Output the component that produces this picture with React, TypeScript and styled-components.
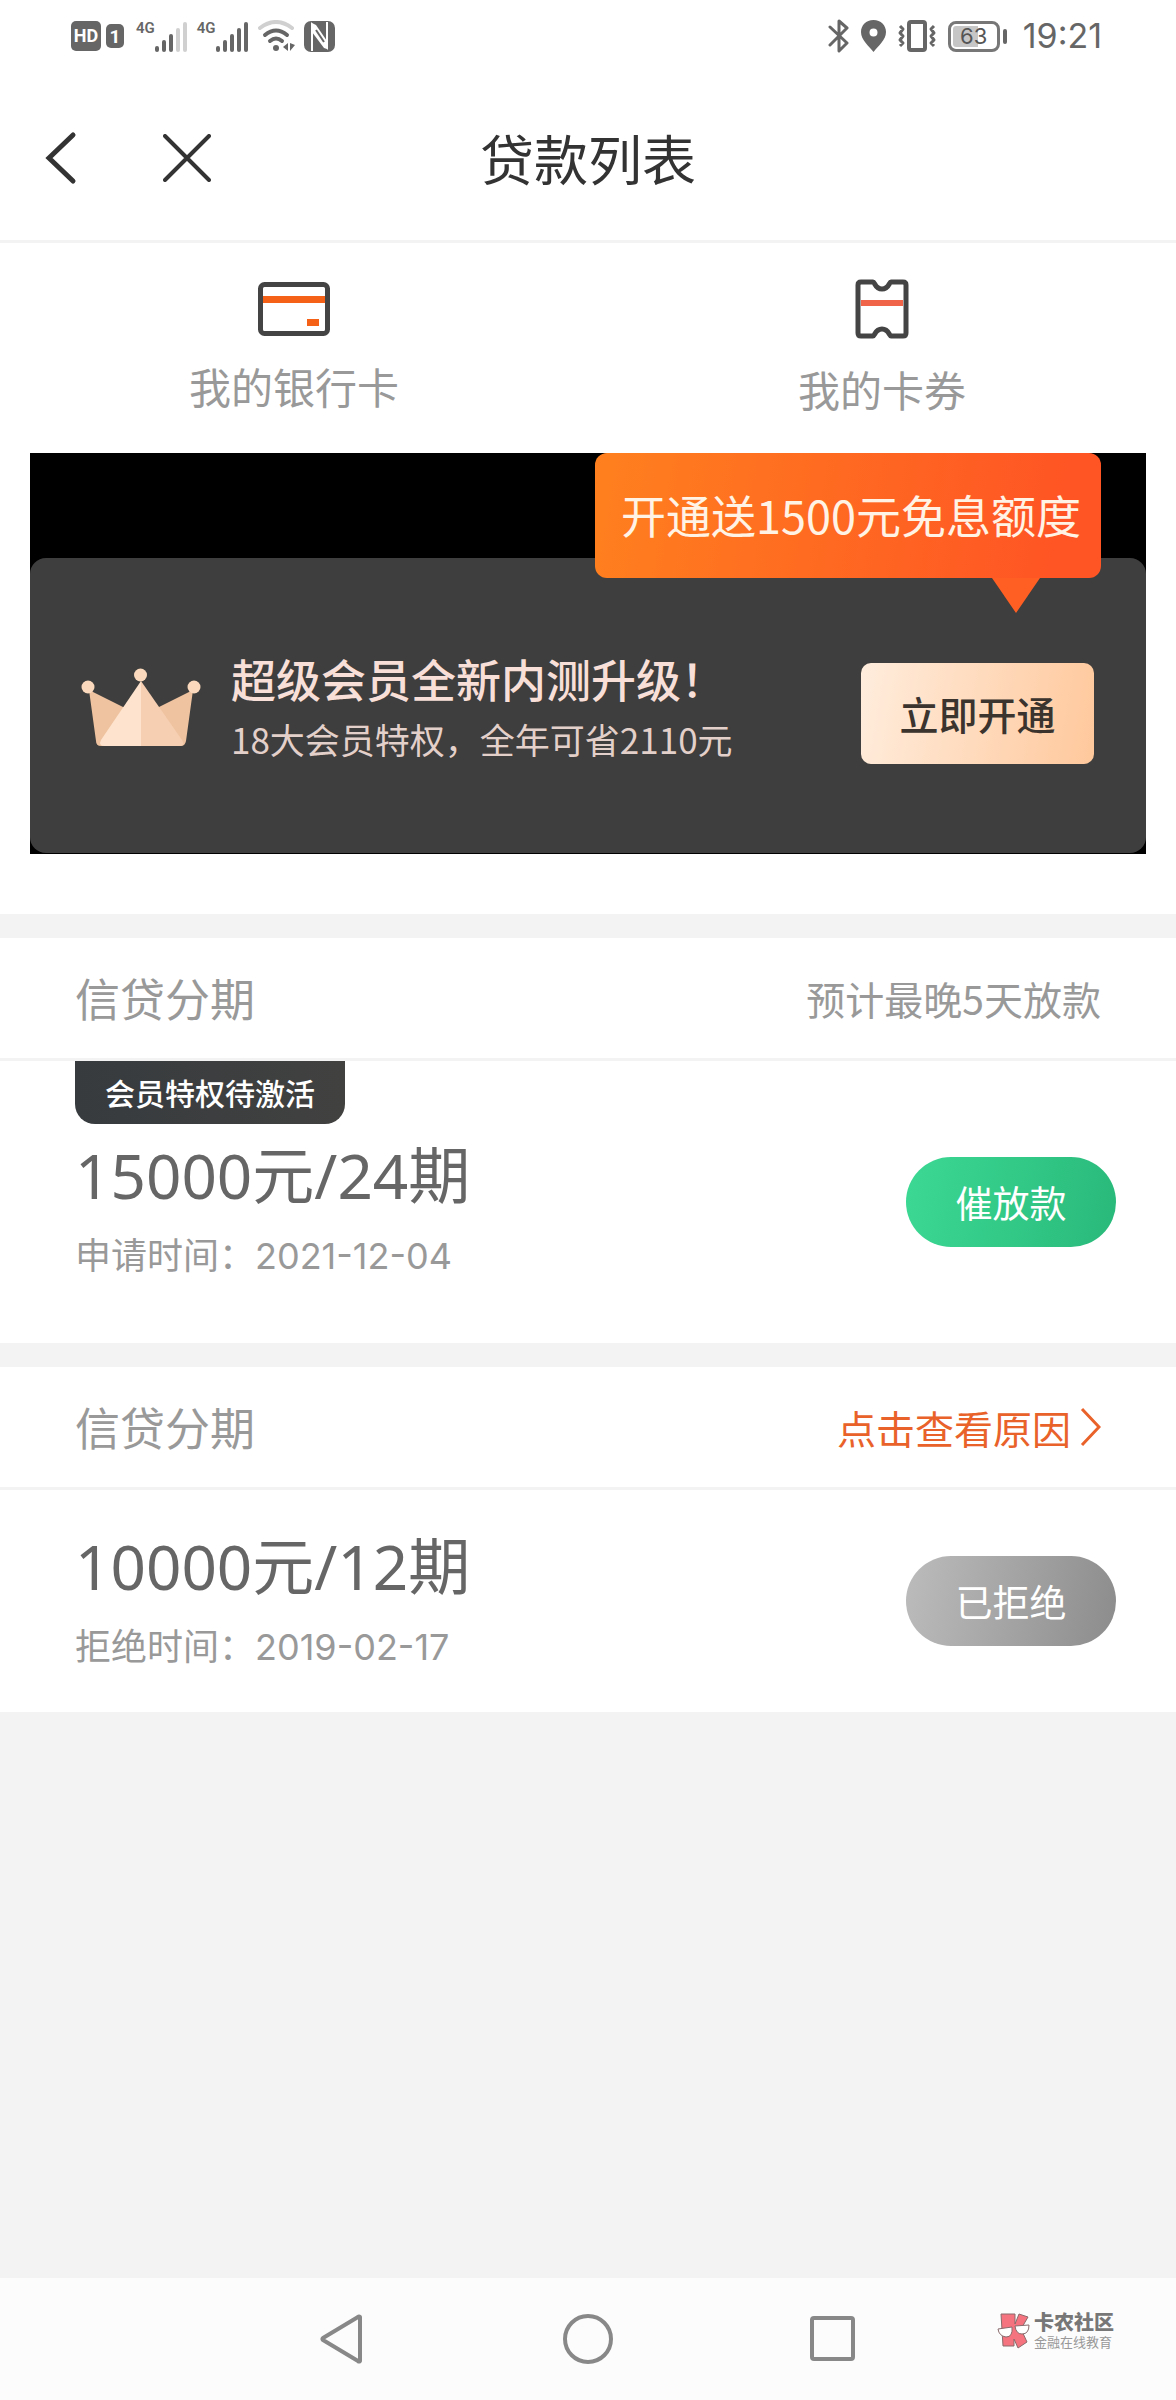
import React from 'react';
import styled, { createGlobalStyle } from 'styled-components';

const cjk = '"Noto Sans CJK SC", "Noto Sans", sans-serif';
const figures = 'Inter, "Noto Sans CJK SC", sans-serif';
const amountFigures = '"Noto Sans", "Noto Sans CJK SC", sans-serif';
const compact = '"Liberation Sans", "Noto Sans CJK SC", sans-serif';

const GlobalStyle = createGlobalStyle`
  * { box-sizing: border-box; }
  body { margin: 0; background: #f3f3f3; font-family: ${cjk}; }
  h1, h2, p { margin: 0; font-weight: 400; }
  button { border: 0; padding: 0; background: none; font-family: inherit; cursor: pointer; }
  svg { display: block; flex: none; }
`;

const Page = styled.div`
  display: flex;
  flex-direction: column;
  min-height: 100vh;
`;

/* ---------- status bar ---------- */

const StatusBar = styled.div`
  display: flex;
  justify-content: space-between;
  align-items: center;
  height: 78px;
  padding: 0 74px 6px 71px;
  background: #fff;
  color: #666;
`;

const StatusGroup = styled.div<{ $gap: number }>`
  display: flex;
  align-items: center;
  gap: ${(p) => p.$gap}px;
`;

const Chip = styled.span<{ $width: number; $height: number; $size: number }>`
  display: flex;
  align-items: center;
  justify-content: center;
  width: ${(p) => p.$width}px;
  height: ${(p) => p.$height}px;
  border-radius: 5px;
  background: #666;
  color: #fff;
  font: 700 ${(p) => p.$size}px/1 Roboto, sans-serif;
`;

const Signals = styled.div`
  display: flex;
  align-items: center;
  gap: 8px;
  padding-left: 7px;
`;

const Signal = styled.span`
  display: flex;
  align-items: flex-start;
  font: 600 15px/14px Roboto, sans-serif;
`;

const Battery = styled.span`
  display: flex;
  align-items: center;
  gap: 3px;
`;

const BatteryCase = styled.span`
  display: flex;
  align-items: center;
  justify-content: center;
  width: 52px;
  height: 31px;
  border: 3px solid #777;
  border-radius: 8px;
  padding: 2px;
  background: linear-gradient(to right, #c6c6c6 60%, #fff 60%) content-box;
  color: #555;
  font: 400 22px/24px ${figures};
`;

const BatteryTip = styled.span`
  width: 4px;
  height: 15px;
  border-radius: 2px;
  background: #666;
`;

const Clock = styled.time`
  margin-left: 4px;
  font: 400 34px/40px ${figures};
`;

/* ---------- title bar ---------- */

const TitleBar = styled.header`
  display: grid;
  grid-template-columns: 1fr auto 1fr;
  align-items: center;
  height: 165px;
  padding: 0 44px 3px;
  border-bottom: 3px solid #f3f3f3;
  background: #fff;
`;

const TitleActions = styled.div`
  display: flex;
  align-items: center;
  gap: 83px;
`;

const Title = styled.h1`
  color: #333;
  font-size: 54px;
  line-height: 72px;
`;

/* ---------- shortcuts ---------- */

const Shortcuts = styled.nav`
  display: grid;
  grid-template-columns: 1fr 1fr;
  align-items: center;
  padding: 36px 0 34px;
  background: #fff;
`;

const Shortcut = styled.a`
  display: flex;
  flex-direction: column;
  align-items: center;
  gap: 20px;
  color: #999;
  font-size: 42px;
  line-height: 60px;
  text-decoration: none;
`;

/* ---------- membership banner ---------- */

const BannerArea = styled.section`
  padding: 0 30px 60px;
  background: #fff;
`;

const Banner = styled.div`
  position: relative;
  padding: 105px 0 1px;
  background: #000;
`;

const BannerPanel = styled.div`
  display: flex;
  align-items: center;
  height: 295px;
  padding: 4px 52px 0 51px;
  border-radius: 16px;
  background: #3d3e3d;
`;

const Bubble = styled.p`
  position: absolute;
  top: 0;
  right: 45px;
  height: 125px;
  padding: 0 20px 0 26px;
  border-radius: 12px;
  background: linear-gradient(100deg, #ff801e, #ff5524 90%);
  color: #fff3e6;
  font-size: 45px;
  line-height: 124px;
  white-space: nowrap;

  &::after {
    content: '';
    position: absolute;
    top: 100%;
    right: 61px;
    border: solid transparent;
    border-width: 35px 24px 0;
    border-top-color: #ff5f23;
  }
`;

const BannerText = styled.div`
  flex: 1;
  padding: 3px 0 0 30px;
`;

const BannerTitle = styled.h2`
  color: #f8dfd7;
  font-size: 45px;
  font-weight: 500;
  line-height: 60px;
`;

const BannerNote = styled.p`
  color: #e4d0ca;
  font-size: 35px;
  line-height: 60px;
`;

const JoinButton = styled.button`
  width: 233px;
  height: 101px;
  margin-top: 11px;
  border-radius: 10px;
  background: linear-gradient(100deg, #ffeddd, #ffc89c);
  color: #3a332e;
  font-size: 39px;
  font-weight: 500;
`;

/* ---------- loan records ---------- */

const Loan = styled.section`
  border-top: 24px solid #f3f3f3;
  background: #fff;
`;

const LoanHead = styled.div`
  display: flex;
  align-items: center;
  justify-content: space-between;
  height: 123px;
  padding: 0 75px;
  border-bottom: 3px solid #f3f3f3;
  color: #999;
  font-size: 39px;
`;

const LoanKind = styled.h2`
  font-size: 45px;
  line-height: 60px;
`;

const ReasonLink = styled.a`
  display: flex;
  align-items: center;
  color: #e9622a;
  text-decoration: none;
`;

const LoanBody = styled.div`
  display: flex;
  align-items: center;
  justify-content: space-between;
  padding: 0 60px 0 75px;
`;

const LoanInfo = styled.div<{ $tagged: boolean }>`
  display: flex;
  flex-direction: column;
  align-items: flex-start;
  padding: ${(p) => (p.$tagged ? '0 0 60px' : '34px 0 38px')};
`;

const Tag = styled.span`
  margin-bottom: 9px;
  padding: 0 30px;
  border-radius: 0 0 20px 20px;
  background: linear-gradient(to right, #373b3e, #414140);
  color: #fff;
  font-size: 30px;
  font-weight: 500;
  line-height: 63px;
`;

const Amount = styled.p`
  color: #666;
  font: 400 62px/84px ${amountFigures};
`;

const DateLine = styled.p`
  padding-top: 12px;
  color: #999;
  font: 400 36px/54px ${figures};
`;

const Pill = styled.button<{ $from: string; $to: string }>`
  width: 210px;
  height: 90px;
  border-radius: 45px;
  background: linear-gradient(100deg, ${(p) => p.$from}, ${(p) => p.$to});
  color: #fff;
  font-size: 37px;
`;

/* ---------- system navigation ---------- */

const SystemNav = styled.footer`
  position: relative;
  display: flex;
  align-items: center;
  justify-content: center;
  gap: 195px;
  height: 122px;
  margin-top: auto;
  background: #fcfcfc;
`;

const Watermark = styled.div`
  position: absolute;
  top: 33px;
  right: 62px;
  display: flex;
  align-items: center;
  gap: 3px;
`;

const WatermarkName = styled.div`
  color: #777;
  font: 900 20px/24px ${compact};
`;

const WatermarkNote = styled.div`
  color: #999;
  font: 400 13px/16px ${compact};
`;

/* ---------- drawings ---------- */

const SignalBars = ({ level }: { level: number }) => (
  <svg width="34" height="31" viewBox="0 0 34 31">
    {[6, 12, 18, 24, 30].map((h, i) => (
      <rect key={h} x={i * 7} y={31 - h} width="4" height={h} rx="2" fill={i < level ? '#666' : '#d0d0d0'} />
    ))}
  </svg>
);

const WifiIcon = () => (
  <svg width="38" height="32" viewBox="0 0 38 32" fill="none" strokeWidth="4" strokeLinecap="round">
    <path d="M2 8Q18 -4 34 8" stroke="#d0d0d0" />
    <path d="M7 15Q18 6 29 15" stroke="#666" />
    <path d="M12 21Q18 16 24 21" stroke="#666" />
    <circle cx="18" cy="28" r="3" fill="#666" />
    <path d="M30 23v8l-5-4zM32 23v8l5-6z" fill="#666" />
  </svg>
);

const NfcIcon = () => (
  <svg width="31" height="31" viewBox="0 0 31 31">
    <rect width="31" height="31" rx="7" fill="#666" />
    <path d="M8 30V4l15 22V1" fill="none" stroke="#fff" strokeWidth="2" />
    <path d="M8 2l4 2 11 16v8l-3-1L8 11z" fill="#fff" />
    <path d="M12 9l8 12" stroke="#666" strokeWidth="2" />
  </svg>
);

const BluetoothIcon = () => (
  <svg width="21" height="34" viewBox="0 0 21 34" fill="none" stroke="#666" strokeWidth="3" strokeLinejoin="round" strokeLinecap="round">
    <path d="M2 8l17 16-8 8V2l8 7L2 26" />
  </svg>
);

const PinIcon = () => (
  <svg width="25" height="32" viewBox="0 0 25 32">
    <path fill="#666" fillRule="evenodd" d="M12.500 0C5 0 0 5.500 0 12c0 8 8 14 12.500 20C17 26 25 20 25 12 25 5.500 20 0 12.500 0zm0 8.500a4 4 0 1 1 0 8 4 4 0 0 1 0-8z" />
  </svg>
);

const VibrateIcon = () => (
  <svg width="38" height="32" viewBox="0 0 38 32" fill="none" stroke="#666" strokeWidth="3" strokeLinejoin="round">
    <rect x="11" y="2" width="16" height="28" rx="2" strokeWidth="4" />
    <path d="M2 6l3 3-3 4 3 3-3 4 3 3-3 3M36 6l-3 3 3 4-3 3 3 4-3 3 3 3" />
  </svg>
);

const BackIcon = () => (
  <svg width="36" height="54" viewBox="0 0 36 54" fill="none" stroke="#333" strokeWidth="5" strokeLinecap="round">
    <path d="M29 4L5 27l24 23" />
  </svg>
);

const CloseIcon = () => (
  <svg width="48" height="48" viewBox="0 0 48 48" fill="none" stroke="#333" strokeWidth="4" strokeLinecap="round">
    <path d="M2 2l44 44M46 2L2 46" />
  </svg>
);

const CardIcon = () => (
  <svg width="72" height="54" viewBox="0 0 72 54">
    <rect x="2.500" y="2.500" width="67" height="49" rx="4" fill="#fff" stroke="#444" strokeWidth="5" />
    <path d="M5 14h62v7H5z" fill="#f56217" />
    <path d="M49 37h12v7H49z" fill="#f56217" />
  </svg>
);

const TicketIcon = () => (
  <svg width="54" height="60" viewBox="0 0 54 60">
    <path
      d="M6 3h12c2 0 2 7 9 7s7-7 9-7h12q3 0 3 3v48q0 3-3 3H36c-2 0-2-7-9-7s-7 7-9 7H6q-3 0-3-3V6q0-3 3-3z"
      fill="#fff"
      stroke="#444"
      strokeWidth="5"
      strokeLinejoin="round"
    />
    <path d="M6 21h42v6H6z" fill="#f0654a" />
  </svg>
);

const CrownIcon = () => (
  <svg width="120" height="79" viewBox="0 0 120 79">
    <path d="M8 22l34 17h36l34-17-7 51q-1 5-5 5H20q-5 0-5-5z" fill="#efc3a0" />
    <path d="M60 13v65H24q-7 0-4-6z" fill="#fee4ce" />
    <path d="M60 13v65h37q8 0 4-6z" fill="#f6cfb2" />
    <g fill="#fbd9bd">
      <circle cx="7" cy="19" r="6.500" />
      <circle cx="59.500" cy="7" r="6.500" />
      <circle cx="113" cy="19" r="6.500" />
    </g>
  </svg>
);

const ReasonArrow = () => (
  <svg width="30" height="40" viewBox="0 0 30 40" fill="none" stroke="#e9622a" strokeWidth="3">
    <path d="M11 2l17 18-17 18" />
  </svg>
);

const NavBack = () => (
  <svg width="50" height="50" viewBox="0 0 50 50" fill="none" stroke="#888" strokeWidth="4" strokeLinejoin="round">
    <path d="M42 3v44q-1 1-2 0L5 26q-1-1 0-2L40 3q1-1 2 0z" />
  </svg>
);

const NavHome = () => (
  <svg width="50" height="50" viewBox="0 0 50 50" fill="none" stroke="#888" strokeWidth="4">
    <circle cx="25" cy="25" r="23" />
  </svg>
);

const NavRecent = () => (
  <svg width="50" height="50" viewBox="0 0 50 50" fill="none" stroke="#888" strokeWidth="4">
    <rect x="4" y="4" width="41" height="41" rx="2" />
  </svg>
);

const MascotIcon = () => (
  <svg width="34" height="36" viewBox="0 0 34 36" stroke="#8a6a6c" strokeWidth="1">
    <path d="M4 1h14v10l4-10 9 3-7 12 6 13-9 6-4-9v7H6z" fill="#f4737e" />
    <path d="M1 16l14-2q1 10-6 10-7-1-8-8zM18 13l14-1q0 9-7 9-6 0-7-8z" fill="#fff" />
  </svg>
);

/* ---------- page ---------- */

type LoanRecord = {
  amount: string;
  date: string;
  tag?: string;
  note?: string;
  reason?: string;
  action: string;
  from: string;
  to: string;
};

const loans: LoanRecord[] = [
  {
    amount: '15000元/24期',
    date: '申请时间：2021-12-04',
    tag: '会员特权待激活',
    note: '预计最晚5天放款',
    action: '催放款',
    from: '#3cd994',
    to: '#29b97a',
  },
  {
    amount: '10000元/12期',
    date: '拒绝时间：2019-02-17',
    reason: '点击查看原因',
    action: '已拒绝',
    from: '#bcbcbc',
    to: '#8c8c8c',
  },
];

export default function App() {
  return (
    <Page>
      <GlobalStyle />
      <StatusBar>
        <StatusGroup $gap={5}>
          <Chip $width={30} $height={30} $size={18}>HD</Chip>
          <Chip $width={18} $height={24} $size={19}>1</Chip>
          <Signals>
            <Signal>4G<SignalBars level={3} /></Signal>
            <Signal>4G<SignalBars level={5} /></Signal>
            <WifiIcon />
            <NfcIcon />
          </Signals>
        </StatusGroup>
        <StatusGroup $gap={12}>
          <BluetoothIcon />
          <PinIcon />
          <VibrateIcon />
          <Battery>
            <BatteryCase>63</BatteryCase>
            <BatteryTip />
          </Battery>
          <Clock>19:21</Clock>
        </StatusGroup>
      </StatusBar>

      <TitleBar>
        <TitleActions>
          <button type="button" aria-label="返回"><BackIcon /></button>
          <button type="button" aria-label="关闭"><CloseIcon /></button>
        </TitleActions>
        <Title>贷款列表</Title>
      </TitleBar>

      <main>
        <Shortcuts>
          <Shortcut href="#cards"><CardIcon />我的银行卡</Shortcut>
          <Shortcut href="#coupons"><TicketIcon />我的卡券</Shortcut>
        </Shortcuts>

        <BannerArea>
          <Banner>
            <BannerPanel>
              <CrownIcon />
              <BannerText>
                <BannerTitle>超级会员全新内测升级！</BannerTitle>
                <BannerNote>18大会员特权，全年可省2110元</BannerNote>
              </BannerText>
              <JoinButton type="button">立即开通</JoinButton>
            </BannerPanel>
            <Bubble>开通送1500元免息额度</Bubble>
          </Banner>
        </BannerArea>

        {loans.map((loan) => (
          <Loan key={loan.amount}>
            <LoanHead>
              <LoanKind>信贷分期</LoanKind>
              {loan.note && <span>{loan.note}</span>}
              {loan.reason && (
                <ReasonLink href="#reason">{loan.reason}<ReasonArrow /></ReasonLink>
              )}
            </LoanHead>
            <LoanBody>
              <LoanInfo $tagged={Boolean(loan.tag)}>
                {loan.tag && <Tag>{loan.tag}</Tag>}
                <Amount>{loan.amount}</Amount>
                <DateLine>{loan.date}</DateLine>
              </LoanInfo>
              <Pill type="button" $from={loan.from} $to={loan.to}>{loan.action}</Pill>
            </LoanBody>
          </Loan>
        ))}
      </main>

      <SystemNav>
        <button type="button" aria-label="后退"><NavBack /></button>
        <button type="button" aria-label="主屏幕"><NavHome /></button>
        <button type="button" aria-label="最近任务"><NavRecent /></button>
        <Watermark>
          <MascotIcon />
          <div>
            <WatermarkName>卡农社区</WatermarkName>
            <WatermarkNote>金融在线教育</WatermarkNote>
          </div>
        </Watermark>
      </SystemNav>
    </Page>
  );
}
